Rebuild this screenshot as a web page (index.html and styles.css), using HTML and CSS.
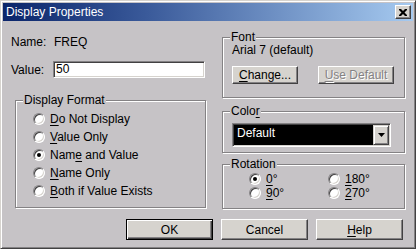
FILE: index.html
```html
<!DOCTYPE html>
<html lang="en">
<head>
  <meta charset="UTF-8" />
  <title>Display Properties</title>
  <link rel="stylesheet" href="styles.css">
</head>
<body>

  <div class="window">
    <div class="titlebar">
      <span class="title">Display Properties</span>
      <button class="close-btn" aria-label="Close">
        <svg width="8" height="7" viewBox="0 0 8 7">
          <path d="M0 0h2l2 2l2-2h2v1l-2.5 2.5l2.5 2.5v1h-2l-2-2l-2 2h-2v-1l2.5-2.5l-2.5-2.5z" fill="#000"/>
        </svg>
      </button>
    </div>

    <div class="main">
      <div class="col-left">
        <div class="field-row row-name">
          <span class="field-label">Name:</span>
          <span class="field-value">FREQ</span>
        </div>
        <div class="field-row row-value">
          <span class="field-label">Value:</span>
          <div class="textbox">50</div>
        </div>

        <div class="group group-format">
          <span class="group-label">Display Format</span>
          <div class="radio-row"><span class="radio"></span><span><u>D</u>o Not Display</span></div>
          <div class="radio-row"><span class="radio"></span><span><u>V</u>alue Only</span></div>
          <div class="radio-row"><span class="radio checked"></span><span>Nam<u>e</u> and Value</span></div>
          <div class="radio-row"><span class="radio"></span><span><u>N</u>ame Only</span></div>
          <div class="radio-row"><span class="radio"></span><span><u>B</u>oth if Value Exists</span></div>
        </div>
      </div>

      <div class="col-right">
        <div class="group group-font">
          <span class="group-label">Font</span>
          <div class="font-name">Arial 7 (default)</div>
          <div class="btn-row">
            <button class="btn btn-change"><u>C</u>hange...</button>
            <button class="btn btn-usedefault" disabled><u>U</u>se Default</button>
          </div>
        </div>

        <div class="group group-color">
          <span class="group-label">Colo<u>r</u></span>
          <div class="combo">
            <div class="combo-value">Default</div>
            <div class="combo-btn">
              <svg width="7" height="4" viewBox="0 0 7 4"><path d="M0 0h7l-3.5 4z" fill="#000"/></svg>
            </div>
          </div>
        </div>

        <div class="group group-rotation">
          <span class="group-label">Rotation</span>
          <div class="rot-grid">
            <div class="radio-row"><span class="radio checked"></span><span><u>0</u>°</span></div>
            <div class="radio-row"><span class="radio"></span><span><u>1</u>80°</span></div>
            <div class="radio-row"><span class="radio"></span><span><u>9</u>0°</span></div>
            <div class="radio-row"><span class="radio"></span><span><u>2</u>70°</span></div>
          </div>
        </div>
      </div>
    </div>

    <div class="actions">
      <button class="btn btn-action btn-default">OK</button>
      <button class="btn btn-action">Cancel</button>
      <button class="btn btn-action"><u>H</u>elp</button>
    </div>
  </div>

</body>
</html>
```

FILE: styles.css
```css
* {
  box-sizing: border-box;
}
body {
  margin: 0;
  font-family: "Liberation Sans", Arial, sans-serif;
  font-size: 12px;
  line-height: 14px;
  color: #000;
  background: #c6c3c6;
}
u {
  text-decoration-thickness: 1px;
  text-underline-offset: 2px;
}
.window {
  width: 416px;
  height: 249px;
  background: #c6c3c6;
  border: 1px solid;
  border-color: #d6d3ce #424142 #424142 #d6d3ce;
  box-shadow: inset 1px 1px #fff, inset -1px -1px #848284;
  padding: 2px;
}
.titlebar {
  height: 18px;
  display: flex;
  align-items: center;
  justify-content: space-between;
  padding: 0 2px 0 3px;
  background: linear-gradient(to right, #0a246a 0%, #3a5a9a 35%, #a6caf0 100%);
  color: #fff;
}
.close-btn {
  width: 16px;
  height: 14px;
  padding: 0;
  display: flex;
  align-items: center;
  justify-content: center;
  background: #d6d3ce;
  border: 1px solid;
  border-color: #fff #424142 #424142 #fff;
  box-shadow: inset -1px -1px #848284;
}
.main {
  display: flex;
  align-items: flex-start;
  padding: 14px 0 0 8px;
}
.col-left {
  width: 195px;
}
.col-right {
  width: 183px;
  margin-left: 16px;
  margin-top: 2px;
}
.field-row {
  display: flex;
  align-items: center;
}
.row-name {
  height: 14px;
}
.row-value {
  height: 17px;
  margin-top: 12px;
}
.field-label {
  width: 42px;
}
.field-value {
  padding-left: 1px;
}
.textbox {
  width: 152px;
  height: 17px;
  padding: 0 2px;
  line-height: 15px;
  background: #fff;
  border: 1px solid;
  border-color: #848284 #fff #fff #848284;
  box-shadow: inset 1px 1px #424142, inset -1px -1px #d6d3ce;
}
.group {
  position: relative;
  border: 1px solid #848284;
  box-shadow: inset 1px 1px #fff, 1px 1px #fff;
}
.group-label {
  position: absolute;
  top: -8px;
  left: 7px;
  padding: 0 1px;
  background: #c6c3c6;
}
.group-format {
  width: 191px;
  height: 108px;
  margin: 22px 0 0 4px;
  padding: 9px 0 0 17px;
}
.radio-row {
  display: flex;
  align-items: center;
  height: 18px;
}
.radio {
  position: relative;
  flex: none;
  width: 12px;
  height: 12px;
  margin-right: 5px;
  border-radius: 50%;
  background: #fff;
  border: 1px solid;
  border-color: #848284 #fff #fff #848284;
  box-shadow: inset 1px 1px #424142, inset -1px -1px #d6d3ce;
}
.radio.checked::after {
  content: "";
  position: absolute;
  top: 3px;
  left: 3px;
  width: 4px;
  height: 4px;
  border-radius: 50%;
  background: #000;
}
.group-font {
  height: 61px;
  padding: 5px 0 0 9px;
}
.btn-row {
  display: flex;
  gap: 20px;
  margin-top: 9px;
}
.btn {
  height: 18px;
  padding: 0;
  font: inherit;
  color: #000;
  background: #d6d3ce;
  border: 1px solid;
  border-color: #fff #424142 #424142 #fff;
  box-shadow: inset -1px -1px #848284;
}
.btn-change {
  width: 66px;
}
.btn-usedefault {
  width: 76px;
  color: #848284;
  text-shadow: 1px 1px #fff;
}
.group-color {
  height: 42px;
  margin-top: 13px;
  padding: 11px 0 0 9px;
}
.combo {
  width: 159px;
  height: 24px;
  display: flex;
  background: #fff;
  border: 1px solid;
  border-color: #848284 #fff #fff #848284;
  box-shadow: inset 1px 1px #424142, inset -1px -1px #d6d3ce;
  padding: 1px;
}
.combo-value {
  flex: 1;
  background: #000;
  color: #fff;
  padding: 1px 0 0 3px;
}
.combo-btn {
  width: 16px;
  display: flex;
  align-items: center;
  justify-content: center;
  background: #d6d3ce;
  border: 1px solid;
  border-color: #d6d3ce #424142 #424142 #d6d3ce;
  box-shadow: inset 1px 1px #fff, inset -1px -1px #848284;
}
.group-rotation {
  height: 45px;
  margin-top: 11px;
  padding: 7px 0 0 26px;
}
.rot-grid {
  display: grid;
  grid-template-columns: 79px auto;
}
.rot-grid .radio-row {
  height: 14px;
}
.actions {
  display: flex;
  justify-content: flex-end;
  gap: 8px;
  margin-top: 10px;
  padding-right: 10px;
}
.btn-action {
  width: 87px;
  height: 21px;
}
.btn-default {
  border: 1px solid #000;
  box-shadow: inset 1px 1px #fff, inset -1px -1px #424142, inset -2px -2px #848284;
}
```
